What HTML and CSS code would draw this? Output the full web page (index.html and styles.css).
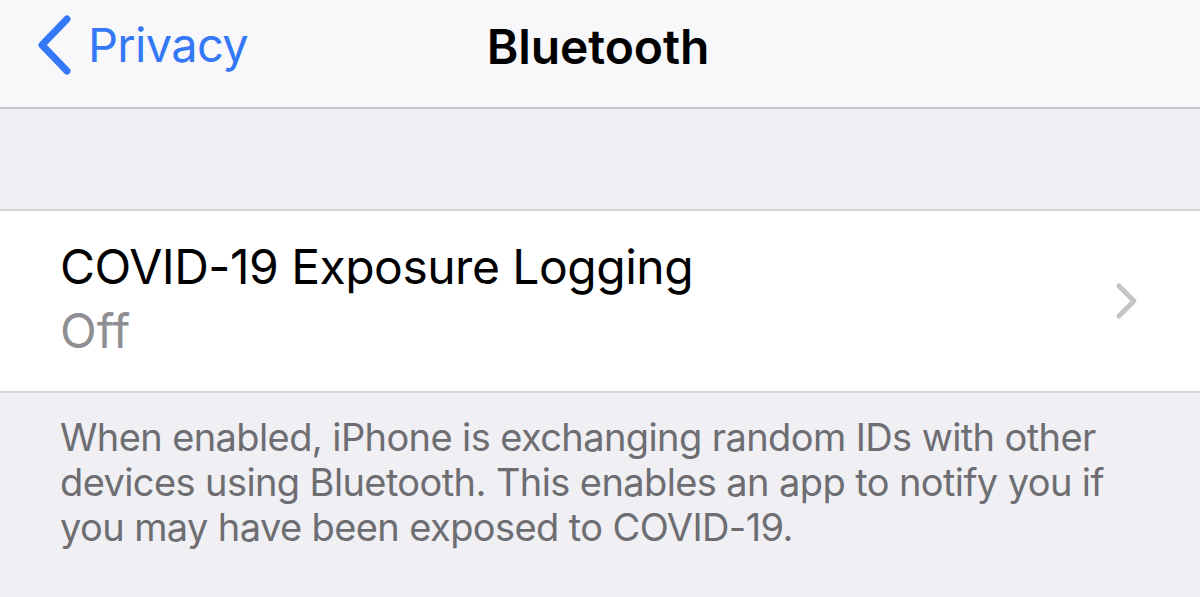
FILE: index.html
```html
<!DOCTYPE html>
<html>
<head>
<meta charset="utf-8">
<link rel="stylesheet" href="styles.css">
</head>
<body>
<div class="screen">
  <header class="nav">
    <div class="back">
      <svg class="back-chev" width="36" height="62" viewBox="0 0 36 62"><path d="M31 5 L6 31 L31 57" fill="none" stroke="#3478f6" stroke-width="7" stroke-linecap="round" stroke-linejoin="round"/></svg>
      <span class="back-label">Privacy</span>
    </div>
    <h1 class="title">Bluetooth</h1>
  </header>
  <div class="spacer"></div>
  <div class="cell">
    <div class="cell-text">
      <div class="cell-title">COVID-19 Exposure Logging</div>
      <div class="cell-value">Off</div>
    </div>
    <svg class="chev" width="24" height="38" viewBox="0 0 24 38"><path d="M4 4 L19 19 L4 34" fill="none" stroke="#c4c4c7" stroke-width="5" stroke-linecap="round" stroke-linejoin="round"/></svg>
  </div>
  <p class="footer">When enabled, iPhone is exchanging random IDs with other devices using Bluetooth. This enables an app to notify you if you may have been exposed to COVID-19.</p>
</div>
</body>
</html>
```
FILE: styles.css
```css
html, body {
  margin: 0;
  padding: 0;
}
body {
  width: 1200px;
  height: 597px;
  overflow: hidden;
  background: #efeff4;
  font-family: Inter, "Noto Sans", sans-serif;
}
.screen {
  display: flex;
  flex-direction: column;
}
.nav {
  position: relative;
  height: 107px;
  background: #f8f8fa;
  border-bottom: 2px solid #c8c8cc;
  display: flex;
  align-items: center;
  justify-content: center;
}
.back {
  position: absolute;
  left: 36px;
  top: 14px;
  display: flex;
  align-items: center;
  gap: 16px;
}
.back-label {
  color: #3478f6;
  font-size: 47px;
  letter-spacing: -0.7px;
  line-height: 62px;
}
.title {
  margin: 0;
  font-size: 48px;
  font-weight: 600;
  color: #000;
  letter-spacing: -0.1px;
  margin-top: -14px;
  margin-left: -4px;
}
.spacer {
  height: 100px;
  border-bottom: 2px solid #d6d6da;
}
.cell {
  height: 180px;
  background: #fff;
  border-bottom: 2px solid #d6d6da;
  display: flex;
  align-items: center;
  padding: 0 61px 0 60px;
}
.cell-text {
  flex: 1;
  display: flex;
  flex-direction: column;
  gap: 8px;
  margin-top: -4px;
}
.cell-title {
  font-size: 48px;
  line-height: 56px;
  color: #000;
  letter-spacing: -0.5px;
}
.cell-value {
  font-size: 48px;
  line-height: 56px;
  color: #8e8e93;
}
.footer {
  margin: 22px 60px 0 60px;
  font-size: 38px;
  line-height: 45px;
  color: #6d6d72;
  letter-spacing: -0.6px;
}
```
